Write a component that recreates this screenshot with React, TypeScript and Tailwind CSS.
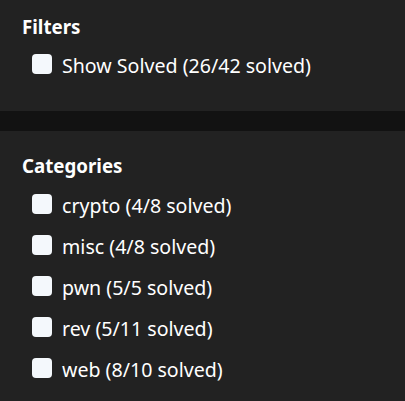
import React from "react";

const cats = [
  "crypto (4/8 solved)",
  "misc (4/8 solved)",
  "pwn (5/5 solved)",
  "rev (5/11 solved)",
  "web (8/10 solved)",
];

function Box() {
  return <span className="block w-[20px] h-[20px] rounded-[4px] bg-[#f4f8fc] shrink-0" />;
}

function Row({ label }: { label: string }) {
  return (
    <div className="flex items-center gap-[10px] h-[41px] pl-[32px]">
      <Box />
      <span className="text-[19.6px] leading-none text-white mt-[5px]">{label}</span>
    </div>
  );
}

export default function App() {
  return (
    <div className="w-[405px] h-[401px] bg-[#222222] text-white overflow-hidden" style={{ fontFamily: '"Noto Sans", "Open Sans", sans-serif' }}>
      <div className="h-[111px] pt-[13px]">
        <h3 className="pl-[22px] text-[18.72px] font-bold leading-[28px]">Filters</h3>
        <div className="mt-[2px]">
          <Row label="Show Solved (26/42 solved)" />
        </div>
      </div>
      <div className="h-[20px] bg-[#121212]" />
      <div className="pt-[21px]">
        <h3 className="pl-[22px] text-[18.72px] font-bold leading-[28px]">Categories</h3>
        <div className="mt-[3px]">
          {cats.map((c) => (
            <Row key={c} label={c} />
          ))}
        </div>
      </div>
    </div>
  );
}
